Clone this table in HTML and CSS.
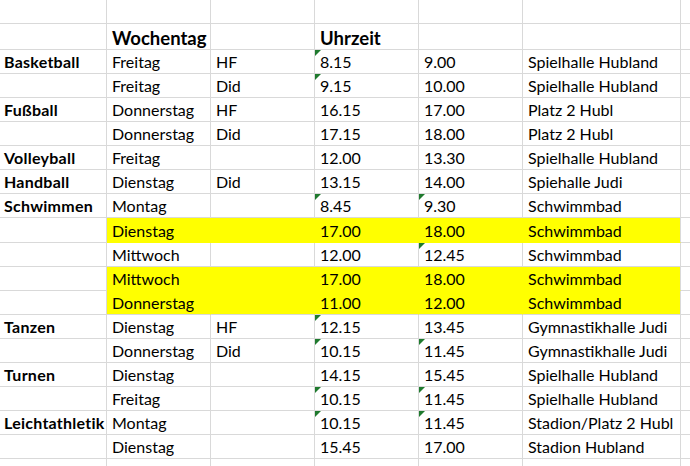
FILE: index.html
```html
<!DOCTYPE html>
<html lang="de">
<head>
<meta charset="utf-8">
<title>Sportzeiten</title>
<link rel="stylesheet" href="styles.css">
</head>
<body>
<div class="sheet">
  <div class="cell"></div><div class="cell"></div><div class="cell"></div><div class="cell"></div><div class="cell"></div><div class="cell"></div><div class="cell"></div>

  <div class="cell"></div><div class="cell head">Wochentag</div><div class="cell"></div><div class="cell head">Uhrzeit</div><div class="cell"></div><div class="cell"></div><div class="cell"></div>

  <div class="cell sport">Basketball</div><div class="cell">Freitag</div><div class="cell">HF</div><div class="cell tri">8.15</div><div class="cell">9.00</div><div class="cell">Spielhalle Hubland</div><div class="cell"></div>
  <div class="cell"></div><div class="cell">Freitag</div><div class="cell">Did</div><div class="cell tri">9.15</div><div class="cell">10.00</div><div class="cell">Spielhalle Hubland</div><div class="cell"></div>
  <div class="cell sport">Fußball</div><div class="cell">Donnerstag</div><div class="cell">HF</div><div class="cell">16.15</div><div class="cell">17.00</div><div class="cell">Platz 2 Hubl</div><div class="cell"></div>
  <div class="cell"></div><div class="cell">Donnerstag</div><div class="cell">Did</div><div class="cell">17.15</div><div class="cell">18.00</div><div class="cell">Platz 2 Hubl</div><div class="cell"></div>
  <div class="cell sport">Volleyball</div><div class="cell">Freitag</div><div class="cell"></div><div class="cell">12.00</div><div class="cell">13.30</div><div class="cell">Spielhalle Hubland</div><div class="cell"></div>
  <div class="cell sport">Handball</div><div class="cell">Dienstag</div><div class="cell">Did</div><div class="cell">13.15</div><div class="cell">14.00</div><div class="cell">Spiehalle Judi</div><div class="cell"></div>
  <div class="cell sport">Schwimmen</div><div class="cell">Montag</div><div class="cell"></div><div class="cell tri">8.45</div><div class="cell tri">9.30</div><div class="cell">Schwimmbad</div><div class="cell"></div>

  <div class="cell"></div><div class="cell y">Dienstag</div><div class="cell y"></div><div class="cell y">17.00</div><div class="cell y">18.00</div><div class="cell y y-end">Schwimmbad</div><div class="cell"></div>
  <div class="cell"></div><div class="cell">Mittwoch</div><div class="cell"></div><div class="cell">12.00</div><div class="cell tri">12.45</div><div class="cell">Schwimmbad</div><div class="cell"></div>
  <div class="cell"></div><div class="cell y">Mittwoch</div><div class="cell y"></div><div class="cell y">17.00</div><div class="cell y">18.00</div><div class="cell y y-end">Schwimmbad</div><div class="cell"></div>
  <div class="cell"></div><div class="cell y y-last">Donnerstag</div><div class="cell y y-last"></div><div class="cell y y-last">11.00</div><div class="cell y y-last">12.00</div><div class="cell y y-end y-last">Schwimmbad</div><div class="cell"></div>

  <div class="cell sport">Tanzen</div><div class="cell">Dienstag</div><div class="cell">HF</div><div class="cell tri">12.15</div><div class="cell">13.45</div><div class="cell">Gymnastikhalle Judi</div><div class="cell"></div>
  <div class="cell"></div><div class="cell">Donnerstag</div><div class="cell">Did</div><div class="cell tri">10.15</div><div class="cell tri">11.45</div><div class="cell">Gymnastikhalle Judi</div><div class="cell"></div>
  <div class="cell sport">Turnen</div><div class="cell">Dienstag</div><div class="cell"></div><div class="cell">14.15</div><div class="cell">15.45</div><div class="cell">Spielhalle Hubland</div><div class="cell"></div>
  <div class="cell"></div><div class="cell">Freitag</div><div class="cell"></div><div class="cell tri">10.15</div><div class="cell tri">11.45</div><div class="cell">Spielhalle Hubland</div><div class="cell"></div>
  <div class="cell sport">Leichtathletik</div><div class="cell">Montag</div><div class="cell"></div><div class="cell tri">10.15</div><div class="cell tri">11.45</div><div class="cell">Stadion/Platz 2 Hubl</div><div class="cell"></div>
  <div class="cell"></div><div class="cell">Dienstag</div><div class="cell"></div><div class="cell">15.45</div><div class="cell">17.00</div><div class="cell">Stadion Hubland</div><div class="cell"></div>

  <div class="cell"></div><div class="cell"></div><div class="cell"></div><div class="cell"></div><div class="cell"></div><div class="cell"></div><div class="cell"></div>
</div>
</body>
</html>
```

FILE: styles.css
```css
html, body {
  margin: 0;
  padding: 0;
  background: #ffffff;
  overflow: hidden;
}

.sheet {
  display: grid;
  grid-template-columns: 107px 104px 104px 104px 104px 158px 40px;
  grid-template-rows: 24px 26px repeat(7, 24px) 25px repeat(10, 24px);
  font-family: Lato, "Open Sans", sans-serif;
  font-size: 16px;
  color: #000000;
}

.cell {
  box-sizing: border-box;
  display: flex;
  align-items: flex-end;
  padding: 0 4px 2px 5px;
  border-right: 1px solid #d9d9d9;
  border-bottom: 1px solid #d9d9d9;
  line-height: 18px;
  white-space: nowrap;
  position: relative;
}

.sport {
  font-weight: 700;
  padding-left: 4px;
  letter-spacing: 0.25px;
}

.head {
  font-weight: 700;
  font-size: 18.5px;
  padding-bottom: 2px;
}

.y {
  background: #ffff00;
  border-right-color: #ffff00;
  border-bottom-color: #ffff00;
}

.y-end { border-right-color: #d9d9d9; }

.y-last { border-bottom-color: #d9d9d9; }

.tri::before {
  content: "";
  position: absolute;
  top: 0;
  left: 0;
  width: 0;
  height: 0;
  border-top: 6px solid #1f7a2e;
  border-right: 6px solid transparent;
}
```
